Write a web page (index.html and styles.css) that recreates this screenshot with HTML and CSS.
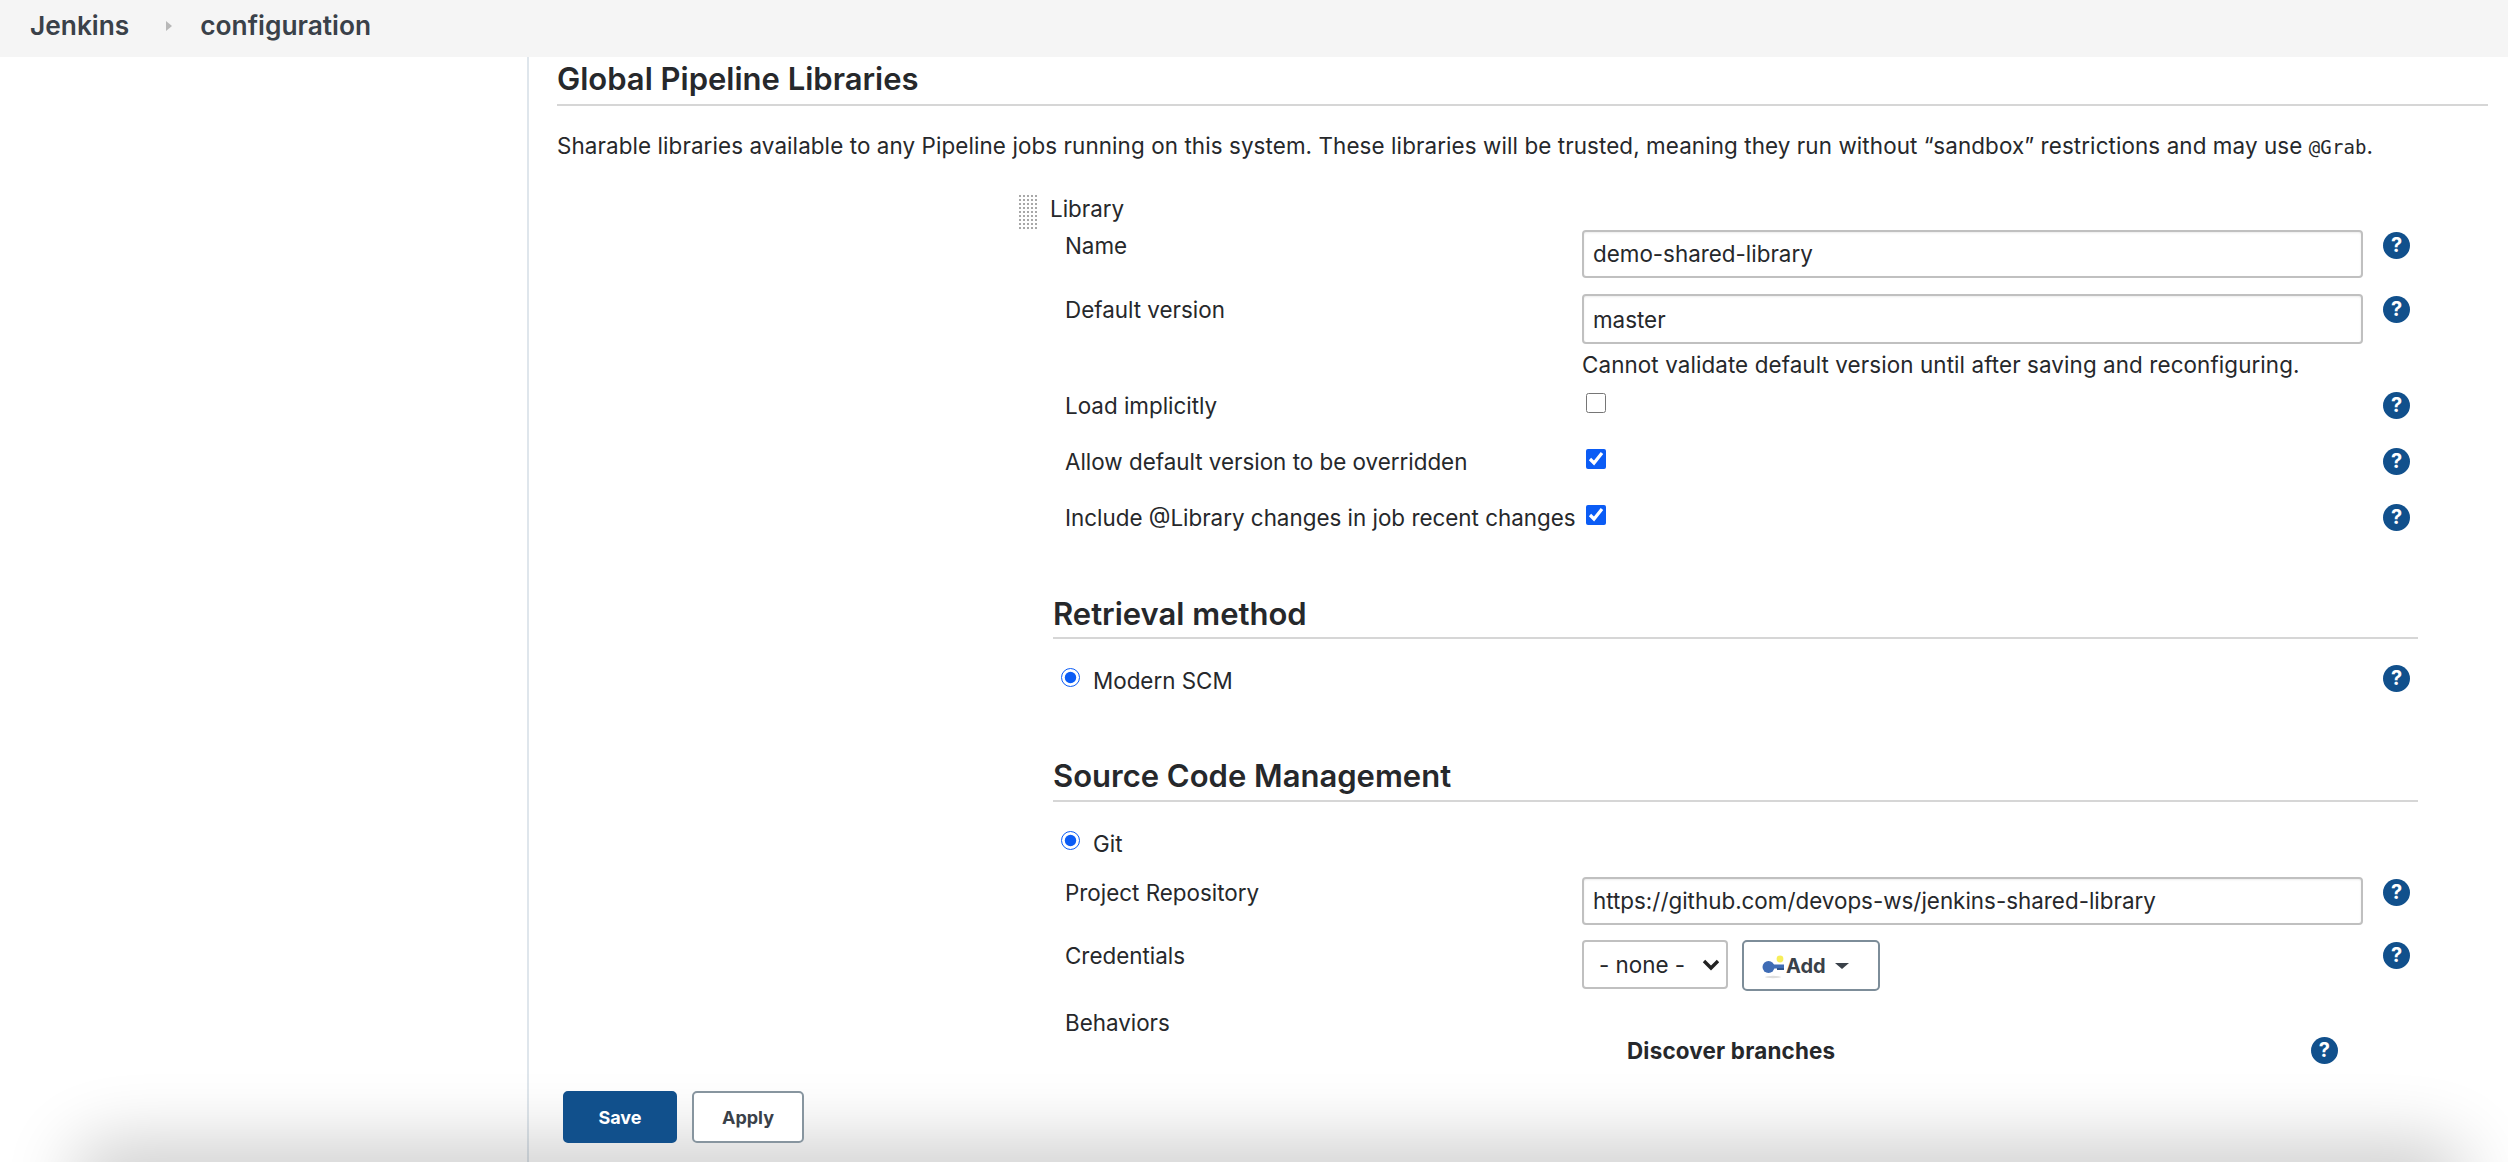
FILE: index.html
```html
<!DOCTYPE html>
<html>
<head>
  <meta charset="utf-8">
  <title>Jenkins configuration</title>
  <link rel="stylesheet" href="styles.css">
</head>
<body>
  <header class="topbar">
    <span class="crumb">Jenkins</span>
    <span class="crumb-sep"></span>
    <span class="crumb">configuration</span>
  </header>

  <div class="page">
    <aside class="sidebar"></aside>
    <main class="content">
      <h1 class="page-title">Global Pipeline Libraries</h1>
      <p class="desc">Sharable libraries available to any Pipeline jobs running on this system. These libraries will be trusted, meaning they run without “sandbox” restrictions and may use <code>@Grab</code>.</p>

      <section class="library">
        <div class="library-head">
          <span class="handle"></span>
          <span>Library</span>
        </div>

        <div class="row row-name">
          <label class="label">Name</label>
          <div class="field"><input class="text" type="text" value="demo-shared-library"></div>
          <span class="help">?</span>
        </div>

        <div class="row row-version">
          <label class="label">Default version</label>
          <div class="field"><input class="text text-tall" type="text" value="master"></div>
          <span class="help">?</span>
        </div>
        <div class="hint">Cannot validate default version until after saving and reconfiguring.</div>

        <div class="row row-check row-load">
          <label class="label">Load implicitly</label>
          <div class="field"><input class="check" type="checkbox"></div>
          <span class="help">?</span>
        </div>
        <div class="row row-check row-allow">
          <label class="label">Allow default version to be overridden</label>
          <div class="field"><input class="check" type="checkbox" checked></div>
          <span class="help">?</span>
        </div>
        <div class="row row-check row-allow">
          <label class="label">Include @Library changes in job recent changes</label>
          <div class="field"><input class="check" type="checkbox" checked></div>
          <span class="help">?</span>
        </div>

        <h2 class="sub-title">Retrieval method</h2>
        <div class="row radio-row">
          <input class="radio" type="radio" name="retrieval" checked>
          <span class="radio-text">Modern SCM</span>
          <span class="help">?</span>
        </div>

        <h2 class="sub-title sub-title-scm">Source Code Management</h2>
        <div class="row radio-row">
          <input class="radio" type="radio" name="scm" checked>
          <span class="radio-text">Git</span>
        </div>

        <div class="row row-repo">
          <label class="label">Project Repository</label>
          <div class="field"><input class="text" type="text" value="https://github.com/devops-ws/jenkins-shared-library"></div>
          <span class="help">?</span>
        </div>

        <div class="row row-creds">
          <label class="label">Credentials</label>
          <div class="field field-creds">
            <select class="select"><option>- none -</option></select>
            <button type="button" class="add-btn">
              <svg class="key" width="24" height="26" viewBox="0 0 24 26">
                <ellipse cx="11" cy="24" rx="8" ry="1.2" fill="#dedede"/>
                <circle cx="18" cy="6" r="3.4" fill="#f7ee5a"/>
                <circle cx="6.5" cy="14" r="6" fill="#3f6cb5"/>
                <rect x="9" y="11.5" width="13" height="4" fill="#3f6cb5"/>
                <rect x="15" y="15" width="7" height="2" fill="#2f558f"/>
              </svg>
              <span>Add</span>
              <span class="caret"></span>
            </button>
          </div>
          <span class="help">?</span>
        </div>

        <div class="behaviors">Behaviors</div>
        <div class="behavior-head">
          <span>Discover branches</span>
          <span class="help">?</span>
        </div>
      </section>
    </main>
  </div>

  <div class="bottom-shadow"></div>
  <div class="actions">
    <button type="button" class="btn btn-primary">Save</button>
    <button type="button" class="btn">Apply</button>
  </div>
</body>
</html>
```

FILE: styles.css
```css
html, body {
  height: 100%;
}

body {
  margin: 0;
  overflow: hidden;
  position: relative;
  display: flex;
  flex-direction: column;
  background: #fff;
  color: #26282b;
  font-family: Inter, sans-serif;
  font-size: 22.4px;
  line-height: 30px;
}

.topbar {
  flex: none;
  height: 57px;
  box-sizing: border-box;
  padding: 0 0 5px 30px;
  display: flex;
  align-items: center;
  background: #f5f5f5;
  color: #3a4149;
  font-size: 26.3px;
  font-weight: 600;
}

.crumb-sep {
  width: 0;
  height: 0;
  margin: 0 28px 0 37px;
  border-left: 6px solid #b8b8b8;
  border-top: 5px solid transparent;
  border-bottom: 5px solid transparent;
}

.page {
  flex: 1;
  display: flex;
  min-height: 0;
}

.sidebar {
  flex: none;
  width: 527px;
  border-right: 2px solid #dfe6ec;
}

.content {
  flex: 1;
  padding: 0 20px 0 28px;
}

.page-title {
  margin: 0;
  padding-bottom: 3px;
  border-bottom: 2px solid #d6d6d6;
  font-size: 31px;
  font-weight: 600;
  line-height: 44px;
}

.desc {
  margin: 25px 0 32px;
  letter-spacing: 0.1px;
  white-space: nowrap;
}

.desc code {
  font-family: "DejaVu Sans Mono", monospace;
  font-size: 19px;
}

.library {
  margin-left: 461px;
  width: 1400px;
}

.library-head {
  height: 36px;
  display: flex;
}

.handle {
  width: 19px;
  height: 35px;
  margin-right: 13px;
  background-image: radial-gradient(circle, #a8a8a8 1px, transparent 1.4px);
  background-size: 4px 4px;
}

.row {
  display: flex;
  align-items: flex-start;
}

.label {
  flex: none;
  width: 564px;
  padding: 1px 0 0 47px;
  box-sizing: border-box;
  white-space: nowrap;
}

.field {
  flex: none;
  width: 781px;
}

.help {
  flex: none;
  width: 27px;
  height: 27px;
  margin: 2px 0 0 20px;
  border-radius: 50%;
  background: #11508c;
  color: #fff;
  font-size: 20px;
  font-weight: 700;
  line-height: 27px;
  text-align: center;
}

.text {
  display: block;
  width: 100%;
  height: 48px;
  box-sizing: border-box;
  padding: 0 9px 2px;
  border: 2px solid #c0c0c0;
  border-radius: 4px;
  background: #fff;
  box-shadow: inset 0 1px 2px rgba(0, 0, 0, 0.08);
  color: #26282b;
  font: inherit;
}

.text-tall {
  height: 50px;
  padding-top: 1px;
  padding-bottom: 1px;
}

.row-name {
  margin-bottom: 16px;
}

.hint {
  margin: 6px 0 10px 564px;
  letter-spacing: 0.1px;
}

.row-allow {
  margin-top: 25px;
}

.check {
  display: block;
  width: 20px;
  height: 20px;
  margin: 3px 0 0 4px;
  accent-color: #0b5cf5;
}

.sub-title {
  margin: 59px 0 0 35px;
  padding-bottom: 1px;
  border-bottom: 2px solid #d6d6d6;
  font-size: 31px;
  font-weight: 600;
  line-height: 44px;
}

.sub-title-scm {
  padding-bottom: 2px;
}

.radio-row {
  margin-top: 26px;
  padding-left: 43px;
  height: 30px;
}

.radio-row .help {
  margin-top: 0;
}

.radio {
  width: 19px;
  height: 19px;
  margin: 3px 13px 0 0;
  accent-color: #0b5cf5;
}

.radio-text {
  flex: none;
  width: 1270px;
  padding-top: 1px;
}

.row-repo {
  margin-top: 19px;
}

.row-creds {
  margin-top: 15px;
}

.field-creds {
  display: flex;
  align-items: flex-start;
  gap: 14px;
}

.select {
  width: 146px;
  height: 49px;
  padding-left: 15px;
  appearance: none;
  border: 2px solid #c0c0c0;
  border-radius: 4px;
  background: #fff url("data:image/svg+xml,%3Csvg xmlns='http://www.w3.org/2000/svg' width='18' height='12'%3E%3Cpath d='M2 2l7 7 7-7' fill='none' stroke='%23222' stroke-width='3.4'/%3E%3C/svg%3E") no-repeat 118px 17px;
  color: #26282b;
  font: inherit;
}

.add-btn {
  width: 138px;
  height: 51px;
  padding: 0 0 0 18px;
  display: flex;
  align-items: center;
  border: 2px solid #7d8d99;
  border-radius: 5px;
  background: #fff;
  color: #3a4149;
  font-family: Inter, sans-serif;
  font-size: 20px;
  font-weight: 700;
}

.key {
  flex: none;
}

.caret {
  margin-left: 9px;
  border-top: 6px solid #3a4149;
  border-left: 7px solid transparent;
  border-right: 7px solid transparent;
}

.behaviors {
  margin-top: 17px;
  padding-left: 47px;
}

.behavior-head {
  margin: -2px 0 0 609px;
  width: 711px;
  display: flex;
  justify-content: space-between;
  font-weight: 700;
  letter-spacing: 0.2px;
}

.behavior-head .help {
  margin-top: 1px;
}

.bottom-shadow {
  position: absolute;
  left: 90px;
  right: 60px;
  bottom: -40px;
  height: 40px;
  border-radius: 40px;
  box-shadow: 0 0 70px 20px rgba(0, 0, 0, 0.2);
}

.actions {
  position: absolute;
  left: 563px;
  bottom: 19px;
  display: flex;
  gap: 15px;
}

.btn {
  width: 112px;
  height: 52px;
  padding: 0;
  border: 2px solid #87959f;
  border-radius: 5px;
  background: #fff;
  color: #3a4149;
  font-family: Inter, sans-serif;
  font-size: 18px;
  font-weight: 700;
}

.btn-primary {
  width: 114px;
  border-color: #11508c;
  background: #11508c;
  color: #fff;
}
```
